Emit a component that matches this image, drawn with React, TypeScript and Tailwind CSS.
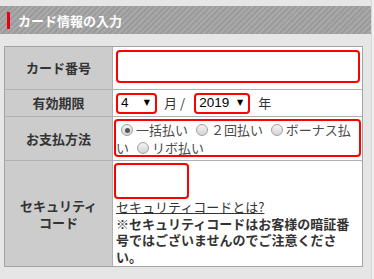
import React from 'react'

function Radio({ checked = false }: { checked?: boolean }) {
  return (
    <span className="relative inline-block h-[12px] w-[12px] ml-[5px] mr-[3px] align-[-1px] rounded-full border border-[#a0a0a0] bg-[linear-gradient(#f4f4f4,#d4d4d4)]">
      {checked && (
        <span className="absolute left-[2.5px] top-[2.5px] h-[5px] w-[5px] rounded-full bg-[#555]" />
      )}
    </span>
  )
}

function Select({ value, width }: { value: string; width: string }) {
  return (
    <div
      className={`flex h-[21px] items-center rounded-[4px] border-2 border-[#ff0000] bg-white pl-[3px] pr-[5px] text-black ${width}`}
    >
      <span className="flex-1 font-['Liberation_Sans',sans-serif] text-[13.5px] leading-none">{value}</span>
      <span className="ml-[5px] font-['DejaVu_Sans',sans-serif] text-[8px] leading-none">▼</span>
    </div>
  )
}

export default function App() {
  return (
    <div className="flex h-[279px] w-[374px] overflow-hidden bg-[#e6e6e6] font-['Noto_Sans_CJK_JP',sans-serif] text-[13px] text-[#333]">
      <div className="w-[371px]">
        {/* section title */}
        <div className="mt-[6px] flex h-[28px] items-center bg-[repeating-linear-gradient(-45deg,#9b9b9b_0px,#9b9b9b_2px,#a9a9a9_2px,#a9a9a9_4px)]">
          <span className="ml-[7px] h-[17px] w-[3px] bg-[#e60012]" />
          <span className="ml-[8px] text-[13px] font-bold leading-none text-white">
            カード情報の入力
          </span>
        </div>

        {/* form table */}
        <div className="ml-[4px] mt-[12px] w-[359px] border border-[#a3a3a3] bg-white">
          <div className="flex h-[43px] border-b border-[#b0b0b0]">
            <div className="flex w-[108px] items-center justify-center border-r border-[#b0b0b0] bg-[#cccccc] font-bold">
              カード番号
            </div>
            <div className="pl-[3px] pt-[3px]">
              <div className="h-[33px] w-[244px] rounded-[4px] border-2 border-[#ff0000] bg-white" />
            </div>
          </div>

          <div className="flex h-[27px] border-b border-[#b0b0b0]">
            <div className="flex w-[108px] items-center justify-center border-r border-[#b0b0b0] bg-[#cccccc] font-bold">
              有効期限
            </div>
            <div className="flex items-center pl-[3px]">
              <Select value="4" width="w-[41px]" />
              <span className="ml-[7px]">月</span>
              <span className="ml-[3px]">/</span>
              <span className="ml-[9px]">
                <Select value="2019" width="w-[56px]" />
              </span>
              <span className="ml-[8px]">年</span>
            </div>
          </div>

          <div className="flex h-[44px] border-b border-[#b0b0b0]">
            <div className="flex w-[108px] items-center justify-center border-r border-[#b0b0b0] bg-[#cccccc] font-bold">
              お支払方法
            </div>
            <div className="pl-[1px] pt-[2px]">
              <div className="h-[38px] w-[247px] rounded-[4px] border-2 border-[#ff0000] text-[13px] leading-[18px] text-[#4a4a4a]">
                <Radio checked />一括払い <Radio />２回払い <Radio />ボーナス払い <Radio />リボ払い
              </div>
            </div>
          </div>

          <div className="flex">
            <div className="flex w-[108px] items-center justify-center border-r border-[#b0b0b0] bg-[#cccccc] text-center font-bold leading-[17px]">
              セキュリティ
              <br />
              コード
            </div>
            <div className="w-[249px] pb-[1px] pl-[1px] pr-[4px] pt-[2px]">
              <div className="h-[36px] w-[75px] rounded-[4px] border-2 border-[#ff0000] bg-white" />
              <div className="pl-[2px] leading-[16.5px]">
                <a href="#" className="underline">
                  セキュリティコードとは?
                </a>
                <p className="font-bold">
                  ※セキュリティコードはお客様の暗証番号ではございませんのでご注意ください。
                </p>
              </div>
            </div>
          </div>
        </div>
      </div>
      <div className="h-full w-[3px] border-l border-[#d6d6d6] bg-[#f0f0f0]" />
    </div>
  )
}
